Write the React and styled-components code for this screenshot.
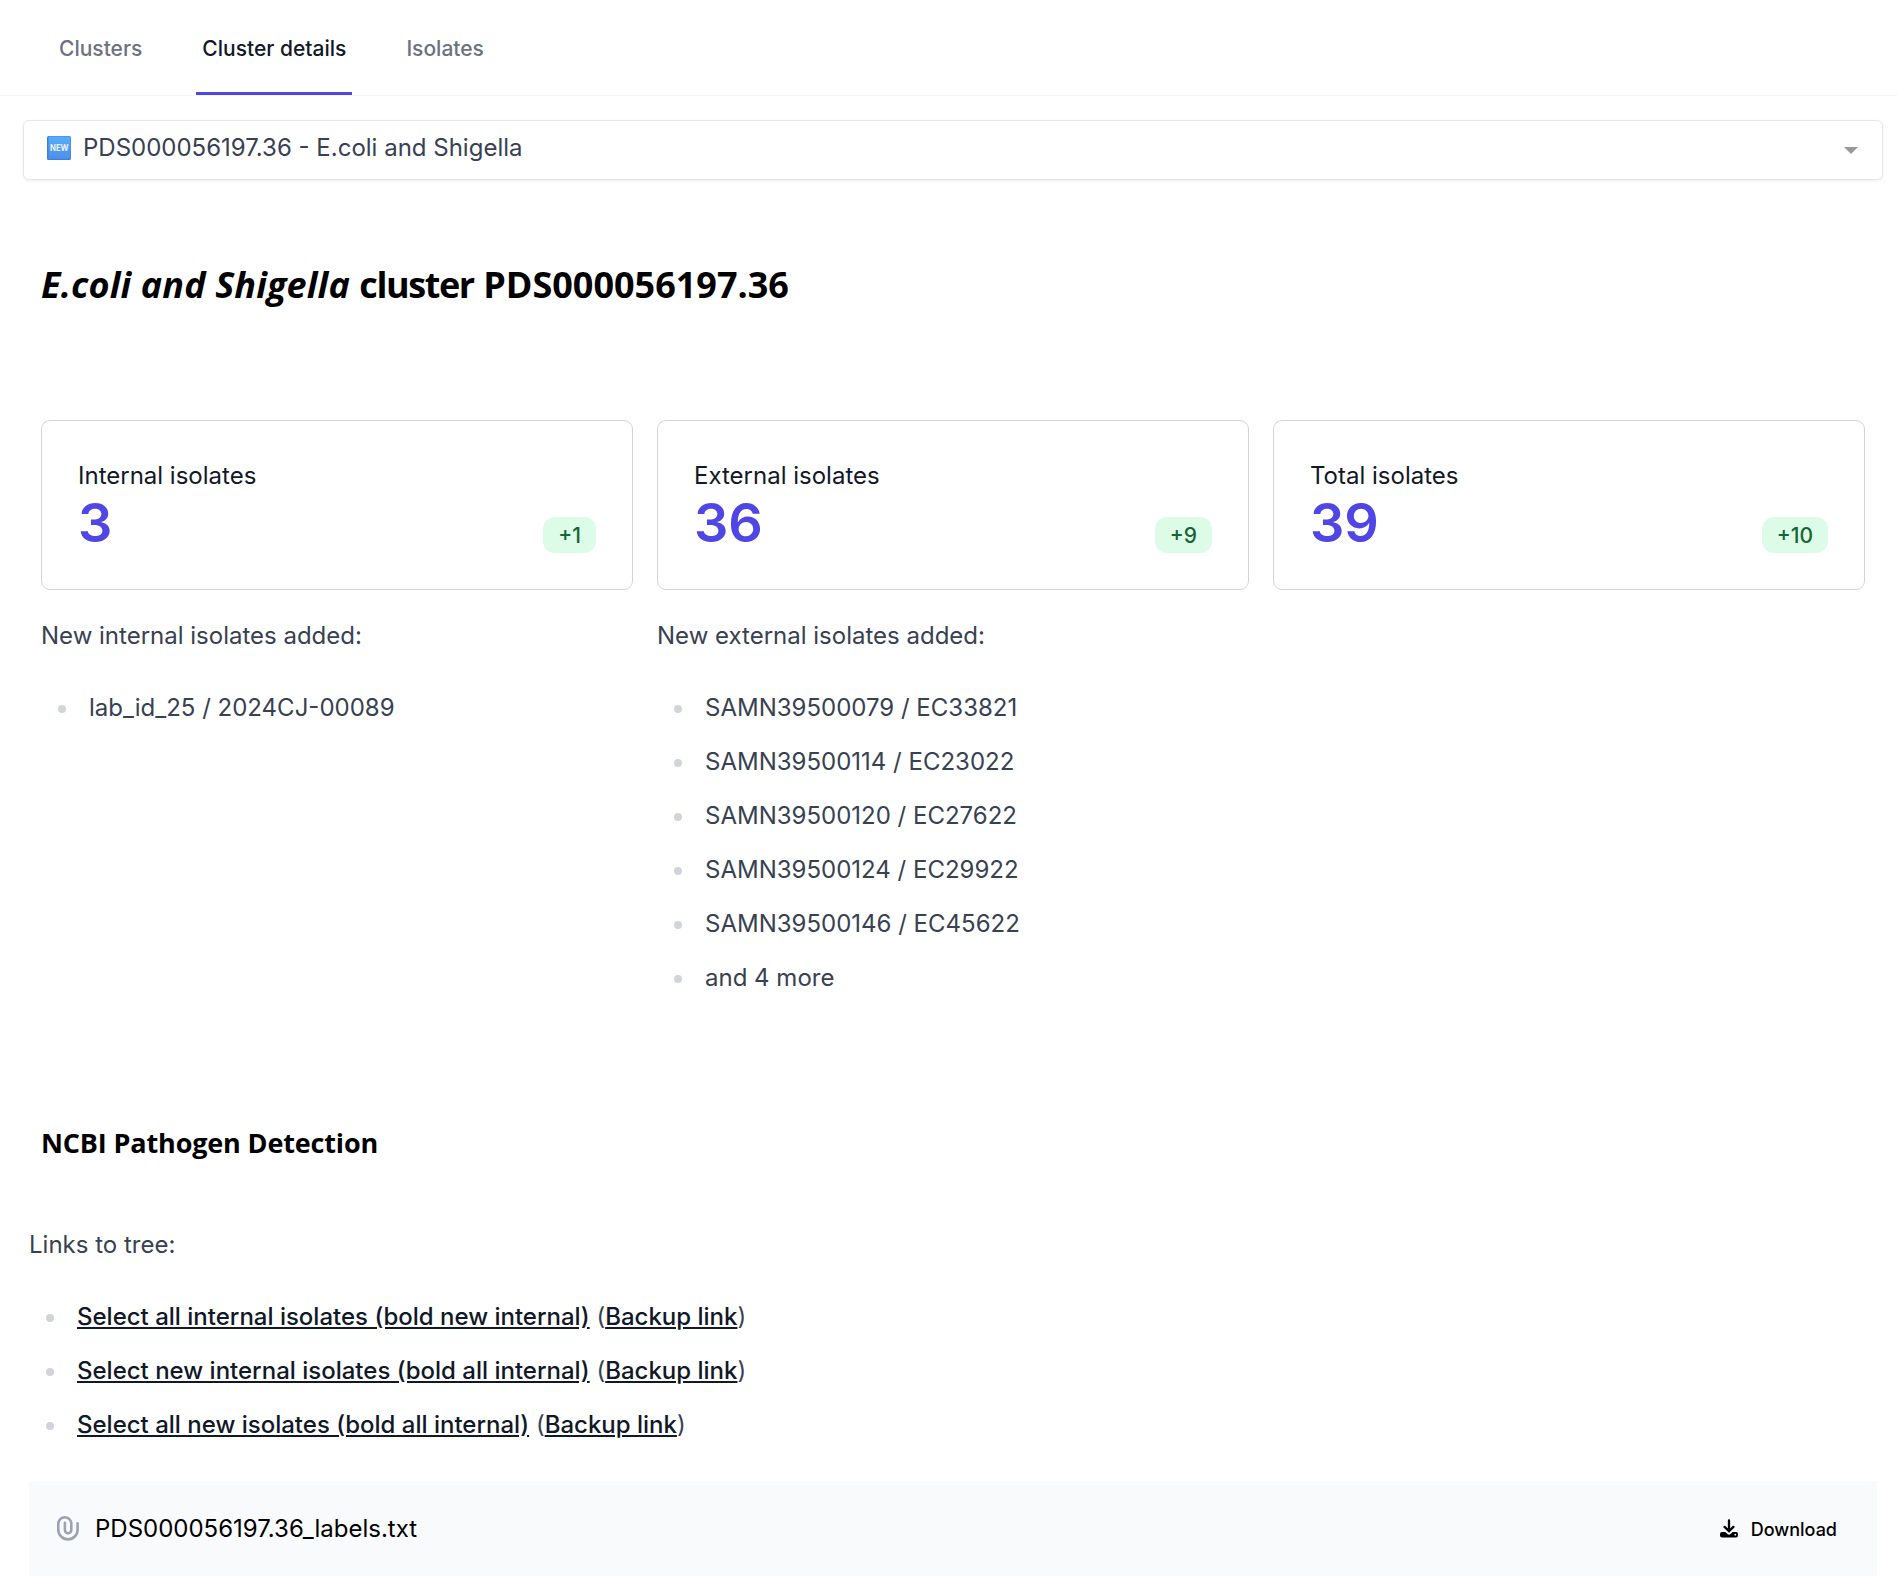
import React from "react";
import styled, { createGlobalStyle } from "styled-components";

const Global = createGlobalStyle`
  *, *::before, *::after { box-sizing: border-box; }
  body { margin: 0; background: #fff; }
  h1, h2, p, ul { margin: 0; padding: 0; font-weight: inherit; }
`;

const Page = styled.div`
  font-family: Inter, "Liberation Sans", sans-serif;
  font-size: 24px;
  line-height: 36px;
  color: #374151;
  display: flex;
  flex-direction: column;
`;

const TabBar = styled.nav`
  display: flex;
  gap: 48px;
  height: 96px;
  padding-left: 53px;
  border-bottom: 1px solid #f3f4f6;
`;

const Tab = styled.button`
  appearance: none;
  border: 0;
  border-bottom: 3px solid ${(p) => (p.$active ? "#4f46e5" : "transparent")};
  background: none;
  height: 95px;
  padding: 5px 6px 0;
  font: 500 21px/30px Inter, sans-serif;
  color: ${(p) => (p.$active ? "#111827" : "#6b7280")};
`;

const Select = styled.div`
  display: flex;
  align-items: center;
  height: 60px;
  margin: 24px 14px 0 23px;
  padding: 0 24px 0 23px;
  border: 1px solid #e5e7eb;
  border-radius: 6px;
  box-shadow: 0 1px 3px rgba(0, 0, 0, 0.08);
  color: #374151;
`;

const SelectLabel = styled.span`
  flex: 1;
  margin: -5px 0 0 12px;
`;

const Caret = styled.span`
  border: 7px solid transparent;
  border-top-color: #999;
  border-bottom: 0;
`;

const Heading = styled.h1`
  margin: 81px 0 0 41px;
  font: 700 36px/48px "Open Sans", "Noto Sans", sans-serif;
  color: #000;
`;

const Species = styled.em`
  letter-spacing: 0.12px;
`;

const Tight = styled.span`
  letter-spacing: -1.4px;
`;

const Subheading = styled.h2`
  margin: 129px 0 0 41px;
  font: 700 27px/36px "Open Sans", "Noto Sans", sans-serif;
  letter-spacing: -0.15px;
  color: #000;
`;

const Columns = styled.section`
  display: grid;
  grid-template-columns: repeat(3, 1fr);
  gap: 24px;
  margin: 111px 32px 0 41px;
`;

const Column = styled.div`
  display: flex;
  flex-direction: column;
`;

const Card = styled.div`
  display: flex;
  flex-direction: column;
  height: 170px;
  padding: 36px;
  margin-bottom: 28px;
  border: 1px solid #d1d5db;
  border-radius: 9px;
  color: #111827;
`;

const CardLabel = styled.span`
  padding-top: 1px;
  margin-bottom: -1px;
`;

const Figures = styled.div`
  display: flex;
  justify-content: space-between;
  align-items: flex-end;
`;

const Value = styled.span`
  font-size: 54px;
  font-weight: 600;
  line-height: 60px;
  color: #4f46e5;
`;

const Badge = styled.span`
  padding: 4px 15px 2px;
  border-radius: 12px;
  background: #dcfce7;
  color: #166534;
  font-size: 21px;
  font-weight: 500;
  line-height: 30px;
`;

const List = styled.ul`
  display: flex;
  flex-direction: column;
  gap: 18px;
  margin-top: 36px;
  list-style: none;
`;

const Item = styled.li`
  display: flex;
  align-items: center;
  padding-left: 17px;

  &::before {
    content: "";
    width: 8px;
    height: 8px;
    margin: 2px 23px 0 0;
    border-radius: 50%;
    background: #d1d5db;
  }
`;

const Links = styled.section`
  margin: 66px 20px 0 29px;
`;

const Link = styled.a`
  color: #111827;
  font-weight: 500;
  text-decoration: underline;
`;

const FileBar = styled.div`
  display: flex;
  align-items: center;
  height: 95px;
  margin: 38px 20px 0 29px;
  padding: 0 40px 0 28px;
  background: #f9fafb;
  color: #000;
`;

const FileName = styled.span`
  flex: 1;
  margin-left: 16px;
`;

const Download = styled.button`
  display: flex;
  align-items: center;
  gap: 12px;
  border: 0;
  padding: 0;
  background: none;
  color: #000;
  font: 500 18px/24px Inter, sans-serif;
`;

const DownloadText = styled.span`
  padding-top: 2px;
`;

const EmojiSvg = styled.svg`
  margin-bottom: 4px;
`;

function NewIcon() {
  return (
    <EmojiSvg width="24" height="24" viewBox="0 0 24 24">
      <defs>
        <linearGradient id="newFill" x1="0" y1="0" x2="0" y2="1">
          <stop offset="0" stopColor="#55aefa" />
          <stop offset="1" stopColor="#4f8fe8" />
        </linearGradient>
      </defs>
      <rect width="24" height="24" rx="1.6" fill="#3f7fdc" />
      <rect x="1.5" y="0.5" width="22" height="22.3" rx="1" fill="url(#newFill)" />
      <text x="12.3" y="15.2" textAnchor="middle" textLength="18.5" lengthAdjust="spacingAndGlyphs"
        fontFamily="Inter, sans-serif" fontWeight="700" fontSize="9" fill="#f2f2fb">NEW</text>
    </EmojiSvg>
  );
}

function PaperClipIcon() {
  return (
    <svg width="22" height="25" viewBox="0 0 22 25" fill="none" stroke="#9ca3af" strokeWidth="2.6" strokeLinecap="round">
      <path d="M7.9 6.8V14a3.2 3.2 0 0 0 6.4 0V7.8a6.5 6.5 0 0 0-13 0v5.9a9.65 9.65 0 0 0 19.3 0V7.2" />
    </svg>
  );
}

function DownloadIcon() {
  return (
    <svg width="20" height="20" viewBox="0 0 20 20">
      <path d="M10 1.4v11M5.6 7.9l4.4 4.4 4.4-4.4" fill="none" stroke="#000" strokeWidth="2.3" strokeLinecap="round" strokeLinejoin="round" />
      <path d="M3 13h3.3l2.2 2.1a2.2 2.2 0 0 0 3 0l2.2-2.1H17a2 2 0 0 1 2 2v1.4a2 2 0 0 1-2 2H3a2 2 0 0 1-2-2v-1.4a2 2 0 0 1 2-2z" fill="#000" />
      <circle cx="16.3" cy="15.7" r="0.9" fill="#f9fafb" />
    </svg>
  );
}

const stats = [
  { label: "Internal isolates", value: 3, delta: "+1", note: "New internal isolates added:", items: ["lab_id_25 / 2024CJ-00089"] },
  {
    label: "External isolates", value: 36, delta: "+9", note: "New external isolates added:",
    items: [
      "SAMN39500079 / EC33821",
      "SAMN39500114 / EC23022",
      "SAMN39500120 / EC27622",
      "SAMN39500124 / EC29922",
      "SAMN39500146 / EC45622",
      "and 4 more",
    ],
  },
  { label: "Total isolates", value: 39, delta: "+10" },
];

const treeLinks = [
  "Select all internal isolates (bold new internal)",
  "Select new internal isolates (bold all internal)",
  "Select all new isolates (bold all internal)",
];

export default function App() {
  return (
    <Page>
      <Global />
      <TabBar>
        <Tab>Clusters</Tab>
        <Tab $active>Cluster details</Tab>
        <Tab>Isolates</Tab>
      </TabBar>
      <Select>
        <NewIcon />
        <SelectLabel>PDS000056197.36 - E.coli and Shigella</SelectLabel>
        <Caret />
      </Select>
      <Heading><Species>E.coli and Shigella</Species> <Tight>cluster</Tight> PDS000056197.36</Heading>
      <Columns>
        {stats.map((s) => (
          <Column key={s.label}>
            <Card>
              <CardLabel>{s.label}</CardLabel>
              <Figures>
                <Value>{s.value}</Value>
                <Badge>{s.delta}</Badge>
              </Figures>
            </Card>
            {s.note && <p>{s.note}</p>}
            {s.items && (
              <List>
                {s.items.map((i) => <Item key={i}>{i}</Item>)}
              </List>
            )}
          </Column>
        ))}
      </Columns>
      <Subheading>NCBI Pathogen Detection</Subheading>
      <Links>
        <p>Links to tree:</p>
        <List>
          {treeLinks.map((t) => (
            <Item key={t}>
              <span><Link>{t}</Link> (<Link>Backup link</Link>)</span>
            </Item>
          ))}
        </List>
      </Links>
      <FileBar>
        <PaperClipIcon />
        <FileName>PDS000056197.36_labels.txt</FileName>
        <Download><DownloadIcon /><DownloadText>Download</DownloadText></Download>
      </FileBar>
    </Page>
  );
}
